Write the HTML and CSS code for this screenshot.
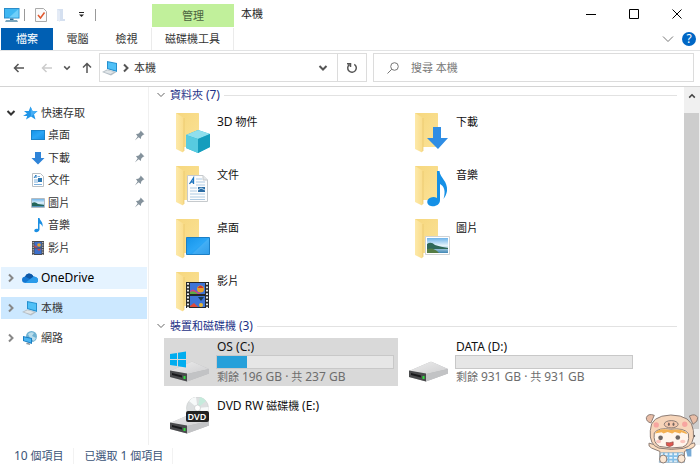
FILE: index.html
```
<!DOCTYPE html>
<html lang="zh-Hant">

<head>
    <meta charset="UTF-8">
    <meta name="viewport" content="width=device-width, initial-scale=1.0">
    <title>本機</title>
    <link rel="stylesheet" href="styles.css">
</head>

<body>
    <!-- icon sprite -->
    <svg class="sprite" width="0" height="0" aria-hidden="true">
        <defs>
            <linearGradient id="g-fold" x1="0" y1="0" x2="1" y2="1">
                <stop offset="0" stop-color="#f6d77e" />
                <stop offset="1" stop-color="#fbe296" />
            </linearGradient>
            <linearGradient id="g-flap" x1="0" y1="0" x2="1" y2="0">
                <stop offset="0" stop-color="#fde9a9" />
                <stop offset="1" stop-color="#f9dc8a" />
            </linearGradient>
            <linearGradient id="g-screen" x1="0" y1="0" x2="1" y2="1">
                <stop offset="0" stop-color="#1494ea" />
                <stop offset=".5" stop-color="#2ba6f6" />
                <stop offset="1" stop-color="#1590e6" />
            </linearGradient>
            <linearGradient id="g-drive" x1="0" y1="0" x2="1" y2="1">
                <stop offset="0" stop-color="#ececec" />
                <stop offset="1" stop-color="#cfcfd1" />
            </linearGradient>
            <linearGradient id="g-sky" x1="0" y1="0" x2="0" y2="1">
                <stop offset="0" stop-color="#6fb4ea" />
                <stop offset=".5" stop-color="#e4f3fb" />
                <stop offset="1" stop-color="#3f86b4" />
            </linearGradient>
        </defs>

        <symbol id="i-folder" viewBox="0 0 48 48">
            <path d="M12 0H34.500Q35 0 35 1V34H12Z" fill="url(#g-fold)" />
            <path d="M12 0L20 5V36Q20 40 18 39L12 36Z" fill="url(#g-flap)" />
            <path d="M20 5V38" stroke="#e8c468" stroke-width=".7" />
        </symbol>
        <symbol id="i-cube" viewBox="0 0 48 48">
            <path d="M34 17L46 21V34L34 40L22 35V22Z" fill="#27b3cf" />
            <path d="M34 17L46 21L34 26L22 22Z" fill="#8fdfed" />
            <path d="M22 22L34 26V40L22 35Z" fill="#57cbe0" />
            <path d="M34 26L46 21V34L34 40Z" fill="#159dbd" />
        </symbol>
        <symbol id="i-bigdown" viewBox="0 0 48 48">
            <path d="M30 14H38V25H45L35 36L24 25H30Z" fill="#2f8de4" />
        </symbol>
        <symbol id="i-bigdoc" viewBox="0 0 48 48">
            <path d="M23.500 9.500H39L43.500 14V35.500H23.500Z" fill="#fdfdfd" stroke="#c6cacd" />
            <path d="M39 9.500V14H43.500" fill="#e3e6e8" stroke="#c6cacd" />
            <path d="M25.500 18L29.500 12V18M27 16H30" fill="none" stroke="#2076c0" stroke-width="1.300" />
            <path d="M32 13H38M32 16H41M32 19H41M26 22H33M26 25H33M26 28H41M26 31H41M26 33.500H41" stroke="#aecbe4" />
            <path d="M34 21H41V26H34Z" fill="#2d6da5" />
            <path d="M34 24L37 22L41 24" fill="none" stroke="#bfe0f5" />
        </symbol>
        <symbol id="i-bignote" viewBox="0 0 48 48">
            <path d="M34 5H36.500C37 12 45 15 44 25C43.500 28 42 31 40.500 33C43 25 41 20 37 18V34C37 39 32 41 28 40C23 39 23 33 28 31.500C30 30.500 32 31 34 32Z" fill="#1590e6" />
        </symbol>
        <symbol id="i-bigscreen" viewBox="0 0 48 48">
            <path d="M22.500 18.500H45.500V35.500H22.500Z" fill="url(#g-screen)" stroke="#1b7fc6" />
            <path d="M45 19L28 35H45Z" fill="#fff" opacity=".12" />
        </symbol>
        <symbol id="i-bigphoto" viewBox="0 0 48 48">
            <path d="M22.500 17.500H46.500V35.500H22.500Z" fill="#fff" stroke="#d0d3d5" />
            <path d="M24 19H45V34H24Z" fill="url(#g-sky)" />
            <path d="M24 25Q28 22 32 26Q38 28 45 29V30H24Z" fill="#2f6858" />
            <path d="M24 30Q31 28 36 34H24Z" fill="#567d45" />
        </symbol>
        <symbol id="i-bigfilm" viewBox="0 0 48 48">
            <path d="M22 10H45V36H22Z" fill="#26282b" />
            <path d="M26 11H41V22H26ZM26 24H41V35H26Z" fill="#3f74d6" />
            <path d="M26 19Q29 16 32 19L37 22H26Z" fill="#d13f8c" />
            <path d="M26 20Q30 18 34 22H26Z" fill="#61a843" />
            <circle cx="36.500" cy="17" r="3.500" fill="#e7a02b" />
            <path d="M33.500 16Q36.500 11 39.500 16Z" fill="#cf352f" />
            <circle cx="37" cy="33" r="2" fill="#e8b632" />
            <path d="M34 25H40L37 29Z" fill="#193b55" />
            <path d="M26 34L30 31L34 35H26Z" fill="#e04a38" />
            <path d="M24 11V36M43 11V36" stroke="#fff" stroke-width="1.800" stroke-dasharray="1.800 1.600" />
        </symbol>

        <symbol id="i-drive" viewBox="0 0 48 48">
            <path d="M6 33L27 24Q28 23.700 29 24L45 31V35.500L23 43.500L6 39Z" fill="#b7b8ba" />
            <path d="M6 33L27 24Q28 23.700 29 24L45 31L23 36Z" fill="url(#g-drive)" />
            <path d="M6 32.500L23 35.500V43.500L6 39Z" fill="#4a4b4d" />
            <path d="M8 35L18 37.500V39.500L8 37Z" fill="#18191b" />
            <path d="M23 36L45 31V35.500L23 43.500Z" fill="#c2c3c5" />
            <path d="M19.500 38H21.500V41H19.500Z" fill="#2fdc3d" />
        </symbol>
        <symbol id="i-winlogo" viewBox="0 0 48 48">
            <path d="M6 16L13 15V21H6ZM14 14.800L22 13.500V21H14ZM6 22H13V28L6 27ZM14 22H22V29.500L14 28.200Z" fill="#00adef" />
        </symbol>
        <symbol id="i-disc" viewBox="0 0 48 48">
            <circle cx="33.500" cy="11" r="11" fill="#dcdfe0" stroke="#c9cccd" stroke-width=".6" />
            <path d="M33.500 11L25 4A11 11 0 0 1 32 0ZM33.500 11L42 18A11 11 0 0 0 44.500 10Z" fill="#f7fafa" />
            <path d="M33.500 11L36 0A11 11 0 0 1 42 4Z" fill="#c5ebdc" />
            <circle cx="33.500" cy="11" r="3" fill="#fff" stroke="#c0c3c4" stroke-width=".6" />
        </symbol>

        <symbol id="i-pc" viewBox="0 0 16 16">
            <path d="M0 1H15.500V11.500H0Z" fill="#2b8cc9" />
            <path d="M1 2H14.500V10.500H1Z" fill="#3fb7f2" />
            <path d="M14.500 2V10.500H5Z" fill="#6fcffa" />
            <path d="M2 13H13L14 15H1Z" fill="#7aa5bd" />
            <path d="M6 11.500H9.500V13H6Z" fill="#2b6f9b" />
        </symbol>
        <symbol id="i-laptop" viewBox="0 0 16 16">
            <path d="M5 1L15 3V12L5 9Z" fill="#2590cf" />
            <path d="M6 2.200L14 3.800V10.500L6 8.200Z" fill="#4fc0f7" />
            <path d="M0 12L5 9.500L14.500 12L9 15.500Z" fill="#b5bfc6" />
            <path d="M2 12L5.500 10.300L12 12L8.500 14Z" fill="#e0e6e9" />
        </symbol>
        <symbol id="i-star" viewBox="0 0 16 16">
            <path d="M8.500 1.500L10.500 6H15.500L12 9.200L13.500 14.500L9 11.500L4 14.500L5.200 11H1L5 8.500L2 6H6.800Z" fill="#2196e8" />
            <path d="M8.500 1.500L9 11.500L12 9.200L15.500 6H10.500Z" fill="#46aef5" />
        </symbol>
        <symbol id="i-screen" viewBox="0 0 16 16">
            <path d="M1 3H15V13H1Z" fill="#1b83ca" />
            <path d="M2 4H14V12H2Z" fill="url(#g-screen)" />
        </symbol>
        <symbol id="i-down" viewBox="0 0 16 16">
            <path d="M5 2H11V8H14.500L8 14.500L1.500 8H5Z" fill="#2f84d8" />
        </symbol>
        <symbol id="i-doc" viewBox="0 0 16 16">
            <path d="M2.500 1.500H10.500L13.500 4.500V14.500H2.500Z" fill="#fff" stroke="#b9bfc4" />
            <path d="M4 6L6 3V6" fill="none" stroke="#2377bd" />
            <path d="M7.500 4.500H10M4 8H8M4 10H8M4 12.500H12" stroke="#7fb0dc" />
            <path d="M8 6H12V10H8Z" fill="#2d77b1" />
        </symbol>
        <symbol id="i-photo" viewBox="0 0 16 16">
            <path d="M1.500 3.500H14.500V12.500H1.500Z" fill="#fff" stroke="#b3bbc1" />
            <path d="M2 4H14V12H2Z" fill="url(#g-sky)" />
            <path d="M2 8Q5 6 8 9L14 10V11H2Z" fill="#24665a" />
        </symbol>
        <symbol id="i-note" viewBox="0 0 16 16">
            <path d="M8 1H9.500C10 4 13.500 5 12.500 10C12 8 11 7 9.500 6.500V12.500C9 15 6 16 4.500 14.500C3.500 12.500 6 11 8 12Z" fill="#1b8fe3" />
        </symbol>
        <symbol id="i-film" viewBox="0 0 16 16">
            <path d="M2 1H14V15H2Z" fill="#4b4c50" />
            <path d="M4.500 2H11.500V7.500H4.500ZM4.500 8.500H11.500V14H4.500Z" fill="#3c6fca" />
            <circle cx="9" cy="5" r="1.800" fill="#e7a02b" />
            <path d="M4.500 5L8 7.500H4.500ZM7 9H11L9 11Z" fill="#d34545" />
            <path d="M3.200 2V15M12.800 2V15" stroke="#ddd" stroke-dasharray="1.200 1.200" />
        </symbol>
        <symbol id="i-cloud" viewBox="0 0 16 16">
            <path d="M4 13Q0 13 0 9.800Q0 7 3 6.500Q5 2.500 9 4Q10.500 4.500 11.500 6.500Q16 7 16 10.300Q16 13 13 13Z" fill="#1477d1" />
            <path d="M3 6.500Q5 2.500 9 4Q10.500 4.500 11.500 6.500L8 9Z" fill="#0d57a5" />
            <path d="M3 13L9 8.500L12 6.600Q16 7 16 10.300Q16 13 13 13Z" fill="#2a9bea" />
        </symbol>
        <symbol id="i-network" viewBox="0 0 16 16">
            <circle cx="9.500" cy="6.500" r="5.500" fill="#6fb2d2" />
            <path d="M6 4Q9 1 12 3L10 6L14 8L12 11L8 8Z" fill="#b9dceb" />
            <path d="M1 6L10 8V14L1 11Z" fill="#1b7ec2" />
            <path d="M2 7.200L9 8.800V12.600L2 10.400Z" fill="#49b5f2" />
            <path d="M5 12.500L8 13.500V15L4 14Z" fill="#8a9aa4" />
        </symbol>
        <symbol id="i-pin" viewBox="0 0 10 10">
            <path d="M6 .5L9.500 4L8.300 4.400L6.500 6.200L6.300 8.200L4.200 6.600L.8 9.500L3.300 5.800L1.800 3.700L3.900 3.500L5.600 1.800Z" fill="#84929c" />
        </symbol>
        <symbol id="i-chev-down" viewBox="0 0 10 10">
            <path d="M1.500 3L5 6.500L8.500 3" fill="none" stroke="currentColor" />
        </symbol>
        <symbol id="i-chev-right" viewBox="0 0 10 10">
            <path d="M3 1.500L6.500 5L3 8.500" fill="none" stroke="currentColor" />
        </symbol>
        <symbol id="i-arrow" viewBox="0 0 12 12">
            <path d="M11 6H1.500M5.500 2L1.500 6L5.500 10" fill="none" stroke="currentColor" stroke-width="1.500" />
        </symbol>
    </svg>

    <header>
        <div class="titlebar">
            <div class="quick-tools">
                <svg class="pc"><use href="#i-pc" /></svg>
                <span class="sep"></span>
                <button class="tool" aria-label="內容">
                    <svg width="12" height="14" viewBox="0 0 12 14">
                        <path d="M.5 .5H8.500L11.500 3.500V13.500H.5Z" fill="#fafafa" stroke="#aaa" />
                        <path d="M3 7L5.500 10L9.500 4.500" fill="none" stroke="#e0562b" stroke-width="1.500" />
                    </svg>
                </button>
                <button class="tool" aria-label="新增資料夾">
                    <svg width="10" height="14" viewBox="0 0 10 14">
                        <path d="M1 1H7V11H9V13H1Z" fill="#d5e0f0" />
                        <path d="M1 1L4 3V14L1 12Z" fill="#e4ebf6" />
                    </svg>
                </button>
                <button class="tool" aria-label="自訂快速存取工具列">
                    <svg width="7" height="6" viewBox="0 0 7 6">
                        <path d="M1 .5H6" stroke="#222" />
                        <path d="M1 2.500H6L3.500 5Z" fill="#222" />
                    </svg>
                </button>
                <span class="sep"></span>
            </div>
            <div class="context">管理</div>
            <h1>本機</h1>
            <div class="window-buttons">
                <button aria-label="最小化"><svg width="10" height="10"><path d="M0 5.500H10" stroke="#000" /></svg></button>
                <button aria-label="最大化"><svg width="10" height="10"><path d="M.5 .5H9.500V9.500H.5Z" fill="none" stroke="#000" /></svg></button>
                <button aria-label="關閉"><svg width="10" height="10"><path d="M.5 .5L9.500 9.500M9.500 .5L.5 9.500" stroke="#000" /></svg></button>
            </div>
        </div>
        <div class="tabs">
            <button class="tab file">檔案</button>
            <button class="tab">電腦</button>
            <button class="tab">檢視</button>
            <button class="tab drive-tools">磁碟機工具</button>
            <button class="collapse" aria-label="展開功能區">
                <svg width="12" height="8"><path d="M1 1.500L6 6.500L11 1.500" fill="none" stroke="#777" /></svg>
            </button>
            <button class="help" aria-label="說明">?</button>
        </div>
    </header>

    <div class="addressbar">
        <div class="history">
            <button aria-label="上一頁"><svg class="arrow"><use href="#i-arrow" /></svg></button>
            <button class="disabled" aria-label="下一頁" disabled><svg class="arrow"><use href="#i-arrow" /></svg></button>
            <button aria-label="最近的位置"><svg class="chev small"><use href="#i-chev-down" /></svg></button>
            <button aria-label="上移"><svg class="arrow"><use href="#i-arrow" /></svg></button>
        </div>
        <div class="address">
            <svg class="icon"><use href="#i-laptop" /></svg>
            <svg class="chev"><use href="#i-chev-right" /></svg>
            <a href="#">本機</a>
            <button class="drop" aria-label="先前的位置"><svg class="chev"><use href="#i-chev-down" /></svg></button>
            <button class="refresh" aria-label="重新整理">
                <svg width="12" height="12" viewBox="0 0 12 12">
                    <path d="M8.300 2.300A4.300 4.300 0 1 1 3.300 2.600M4.500 5V1.800H1" fill="none" stroke="#555" stroke-width="1.500" />
                </svg>
            </button>
        </div>
        <label class="search">
            <svg width="12" height="12" viewBox="0 0 12 12">
                <circle cx="7.500" cy="4.500" r="3.800" fill="none" stroke="#777" />
                <path d="M4.800 7.200L.5 11.500" stroke="#777" />
            </svg>
            <input type="search" placeholder="搜尋 本機" aria-label="搜尋 本機">
        </label>
    </div>

    <div class="explorer">
        <nav class="tree">
            <a class="node open" href="#"><svg class="chev"><use href="#i-chev-down" /></svg><svg class="icon"><use href="#i-star" /></svg>快速存取</a>
            <div class="children">
                <a class="node" href="#"><svg class="icon"><use href="#i-screen" /></svg>桌面<svg class="pin"><use href="#i-pin" /></svg></a>
                <a class="node" href="#"><svg class="icon"><use href="#i-down" /></svg>下載<svg class="pin"><use href="#i-pin" /></svg></a>
                <a class="node" href="#"><svg class="icon"><use href="#i-doc" /></svg>文件<svg class="pin"><use href="#i-pin" /></svg></a>
                <a class="node" href="#"><svg class="icon"><use href="#i-photo" /></svg>圖片<svg class="pin"><use href="#i-pin" /></svg></a>
                <a class="node" href="#"><svg class="icon"><use href="#i-note" /></svg>音樂</a>
                <a class="node" href="#"><svg class="icon"><use href="#i-film" /></svg>影片</a>
            </div>
            <a class="node hover" href="#"><svg class="chev"><use href="#i-chev-right" /></svg><svg class="icon"><use href="#i-cloud" /></svg><span lang="en">OneDrive</span></a>
            <a class="node current" href="#"><svg class="chev"><use href="#i-chev-right" /></svg><svg class="icon"><use href="#i-laptop" /></svg>本機</a>
            <a class="node" href="#"><svg class="chev"><use href="#i-chev-right" /></svg><svg class="icon"><use href="#i-network" /></svg>網路</a>
        </nav>

        <main>
            <section>
                <h2><svg class="chev"><use href="#i-chev-down" /></svg><span>資料夾 <span lang="en">(7)</span></span></h2>
                <div class="items folders">
                    <a class="item" href="#"><svg><use href="#i-folder" /><use href="#i-cube" /></svg><span class="name"><span lang="en">3D</span> 物件</span></a>
                    <a class="item" href="#"><svg><use href="#i-folder" /><use href="#i-bigdown" /></svg><span class="name">下載</span></a>
                    <a class="item" href="#"><svg><use href="#i-folder" /><use href="#i-bigdoc" /></svg><span class="name">文件</span></a>
                    <a class="item" href="#"><svg><use href="#i-folder" /><use href="#i-bignote" /></svg><span class="name">音樂</span></a>
                    <a class="item" href="#"><svg><use href="#i-folder" /><use href="#i-bigscreen" /></svg><span class="name">桌面</span></a>
                    <a class="item" href="#"><svg><use href="#i-folder" /><use href="#i-bigphoto" /></svg><span class="name">圖片</span></a>
                    <a class="item" href="#"><svg><use href="#i-folder" /><use href="#i-bigfilm" /></svg><span class="name">影片</span></a>
                </div>
            </section>
            <section>
                <h2><svg class="chev"><use href="#i-chev-down" /></svg><span>裝置和磁碟機 <span lang="en">(3)</span></span></h2>
                <div class="items drives">
                    <a class="item selected" href="#">
                        <svg><use href="#i-drive" /><use href="#i-winlogo" /></svg>
                        <div class="info">
                            <span class="name" lang="en">OS (C:)</span>
                            <div class="bar"><div class="used" style="width: 17%"></div></div>
                            <span class="space">剩餘 <span lang="en">196 GB ·</span> 共 <span lang="en">237 GB</span></span>
                        </div>
                    </a>
                    <a class="item" href="#">
                        <svg><use href="#i-drive" /></svg>
                        <div class="info">
                            <span class="name" lang="en">DATA (D:)</span>
                            <div class="bar"><div class="used" style="width: 0%"></div></div>
                            <span class="space">剩餘 <span lang="en">931 GB ·</span> 共 <span lang="en">931 GB</span></span>
                        </div>
                    </a>
                    <a class="item" href="#">
                        <svg>
                            <use href="#i-disc" />
                            <use href="#i-drive" y="-7" />
                            <rect x="22" y="14" width="23" height="11" rx="2" fill="#222" />
                            <text class="dvd" x="33" y="23" text-anchor="middle">DVD</text>
                        </svg>
                        <span class="name"><span lang="en">DVD RW</span> 磁碟機 <span lang="en">(E:)</span></span>
                    </a>
                </div>
            </section>
        </main>

        <div class="scrollbar">
            <button aria-label="向上捲動"><svg class="chev up"><use href="#i-chev-down" /></svg></button>
            <div class="thumb"></div>
            <button aria-label="向下捲動"><svg class="chev"><use href="#i-chev-down" /></svg></button>
        </div>
    </div>

    <footer>
        <span><span lang="en">10</span> 個項目</span>
        <span>已選取 <span lang="en">1</span> 個項目</span>
    </footer>

    <!-- piglet mascot -->
    <svg class="mascot" viewBox="75 98 163 154" aria-hidden="true">
        <g stroke="#8b7c75" stroke-width="3" stroke-linejoin="round">
            <path d="M87 189Q84 199 95 204L120 214V240H194V214L221 202Q230 195 224 188L200 196H112Z" fill="#fbdcbf" />
            <path d="M103 105Q84 98 79 112Q78 124 93 128ZM209 107Q228 98 234 112Q236 123 220 132Z" fill="#e9bda6" />
            <path d="M91 151Q91 106 153 104Q217 105 221 151Q227 198 190 205Q155 211 117 204Q87 194 91 151Z" fill="#f6d5ba" />
            <path d="M103 158Q116 141 153 147Q193 142 206 160Q211 194 188 201Q153 207 119 199Q99 190 103 158Z" fill="#fff5ec" />
        </g>
        <path d="M105 160Q112 143 153 149Q195 144 203 162L185 156L181 160L165 155L157 160L143 155L131 160L125 156Z" fill="#f3b052" />
        <ellipse cx="154" cy="132" rx="21" ry="11" fill="#f6c9ae" stroke="#8b7c75" stroke-width="3" />
        <ellipse cx="147" cy="132" rx="3" ry="5" fill="#75655f" />
        <ellipse cx="161" cy="132" rx="3" ry="5" fill="#75655f" />
        <g fill="#f7a5a0">
            <circle cx="109" cy="134" r="8" />
            <circle cx="195" cy="132" r="8" />
            <ellipse cx="116" cy="184" rx="8" ry="5" opacity=".6" />
            <ellipse cx="189" cy="184" rx="8" ry="5" opacity=".6" />
        </g>
        <g fill="#6d6665">
            <circle cx="122" cy="173" r="7" />
            <circle cx="174" cy="172" r="7" />
        </g>
        <path d="M139 187Q150 190 160 185V195Q150 203 140 196Z" fill="#e2564e" stroke="#8c4b45" stroke-width="2" />
        <path d="M122 218H190L194 247H118Z" fill="#e8f4fc" stroke="#6e99b8" stroke-width="2" />
        <path d="M132 218V247M146 218V247M160 218V247M174 218V247M120 228H192M119 239H193" stroke="#62ade0" stroke-width="5" opacity=".75" />
        <g fill="#fbe6d2" stroke="#8b7c75" stroke-width="3">
            <ellipse cx="130" cy="237" rx="11" ry="12" />
            <ellipse cx="185" cy="236" rx="11" ry="12" />
        </g>
        <path d="M198 207H215V229H203" fill="#5595ca" opacity=".8" />
    </svg>
</body>

</html>
```
FILE: styles.css
```
* {
    margin: 0;
    padding: 0;
    box-sizing: border-box;
}

body {
    display: flex;
    flex-direction: column;
    min-height: 100vh;
    background: #fff;
    color: #333;
    font-family: "Noto Sans", "Noto Sans CJK TC", sans-serif;
    font-size: 11px;
    line-height: 16px;
}

/* latin runs sit one size above the chinese text */
[lang="en"] {
    font-size: 12px;
}

h1,
h2 {
    font-size: 11px;
    font-weight: normal;
}

a {
    color: inherit;
    text-decoration: none;
}

button,
input {
    border: none;
    background: none;
    color: inherit;
    font: inherit;
}

button {
    display: flex;
    align-items: center;
    justify-content: center;
}

svg {
    display: block;
    flex-shrink: 0;
}

.sprite {
    position: absolute;
}

.icon {
    width: 16px;
    height: 16px;
}

.chev {
    width: 10px;
    height: 10px;
}

.arrow {
    width: 12px;
    height: 12px;
}

/* title bar and ribbon tabs */
header {
    border-bottom: 1px solid #e2e3e4;
}

.titlebar {
    display: flex;
    height: 27px;
}

.quick-tools {
    display: flex;
    align-items: center;
    width: 152px;
    padding: 2px 0 0 4px;
}

.pc {
    width: 16px;
    height: 16px;
}

.sep {
    width: 1px;
    height: 12px;
    margin: 0 4px;
    background: #999;
}

.tool {
    width: 20px;
    height: 20px;
}

.sep + .tool {
    margin-left: 2px;
}

.context {
    width: 82px;
    margin-top: 4px;
    background: #c1f09b;
    color: #4c6340;
    line-height: 23px;
    text-align: center;
}

h1 {
    flex: 1;
    padding-left: 7px;
    color: #222;
    line-height: 27px;
}

.window-buttons {
    display: flex;
    padding-right: 2px;
}

.window-buttons button {
    width: 43px;
    height: 27px;
}

.tabs {
    display: flex;
    align-items: center;
    height: 23px;
    padding: 0 4px 0 1px;
}

.tab {
    width: 49px;
    height: 22px;
}

.tab.file {
    width: 52px;
    background: #005fb3;
    color: #fff;
}

.tab.drive-tools {
    width: 83px;
    border: 1px solid #ebebeb;
    border-width: 0 1px;
}

.collapse {
    width: 20px;
    height: 20px;
    margin-left: auto;
}

.help {
    width: 14px;
    height: 14px;
    margin-left: 4px;
    border-radius: 50%;
    background: #0067c5;
    color: #fff;
    font-size: 12px;
}

/* navigation row */
.addressbar {
    display: flex;
    align-items: center;
    gap: 6px;
    height: 36px;
    padding: 0 6px 2px 13px;
    border-bottom: 1px solid #d4d4d4;
}

.history {
    display: flex;
    justify-content: space-between;
    width: 80px;
    color: #555;
}

.history .disabled {
    margin-left: 6px;
    color: #ccc;
}

.history button:last-child .arrow {
    transform: rotate(90deg);
}

.chev.small {
    width: 8px;
    height: 8px;
    stroke-width: 2px;
}

.address,
.search {
    display: flex;
    align-items: center;
    height: 29px;
    border: 1px solid #dcdcdc;
}

.address {
    flex: 5 1 0;
    gap: 3px;
}

.address .icon {
    margin-left: 2px;
}

.address .chev {
    color: #555;
    stroke-width: 2px;
}

.drop {
    width: 28px;
    height: 27px;
    margin-left: auto;
}

.refresh {
    width: 29px;
    height: 27px;
    margin-left: -3px;
    border-left: 1px solid #dcdcdc;
}

.search {
    flex: 6 1 0;
    gap: 12px;
}

.search svg {
    margin-left: 13px;
}

.search input {
    flex: 1;
    min-width: 0;
    outline: none;
}

.search input::placeholder {
    color: #777;
}

/* body */
.explorer {
    display: flex;
    flex: 1;
}

.tree {
    width: 149px;
    padding-top: 15px;
    border-right: 1px solid #f0f0f0;
}

.node {
    display: flex;
    align-items: center;
    height: 22px;
    margin: 0 1px 8px 1px;
    padding-left: 5px;
}

.node .chev {
    margin-right: 6px;
    color: #888;
    stroke-width: 2px;
}

.node .icon {
    margin-right: 3px;
}

.node.open {
    margin-bottom: 0;
}

.node.open .chev {
    color: #333;
}

.node.hover {
    background: #e5f3ff;
    color: #000;
}

.node.current {
    background: #cce8ff;
}

.children {
    display: grid;
    height: 135px;
    margin-bottom: 8px;
}

.children .node {
    height: auto;
    margin-bottom: 0;
    padding-left: 29px;
}

.children .icon {
    margin-right: 2px;
}

.pin {
    width: 11px;
    height: 11px;
    margin: 0 2px 0 auto;
}

main {
    flex: 1;
    padding: 0 7px;
}

h2 {
    display: flex;
    align-items: center;
    height: 16px;
    gap: 4px;
    color: #1e3287;
}

h2 .chev {
    color: #666;
}

h2::after {
    content: "";
    flex: 1;
    height: 1px;
    background: #e2e2e2;
}

.items {
    display: grid;
    grid-template-columns: repeat(auto-fill, 234px);
    column-gap: 5px;
    padding-left: 8px;
}

.folders {
    grid-auto-rows: 40px;
    row-gap: 13px;
    margin: 10px 0 6px;
}

.drives {
    grid-auto-rows: 48px;
    row-gap: 11px;
    margin-top: 4px;
}

.item {
    display: flex;
    gap: 5px;
}

.item > svg {
    width: 48px;
    height: 48px;
}

.item.selected {
    background: #d9d9d9;
}

.name {
    display: block;
    padding-top: 1px;
    color: #111;
}

.info .name,
.info .space {
    white-space: nowrap;
}

.bar {
    width: 178px;
    height: 14px;
    margin-left: -1px;
    border: 1px solid #c8c8c8;
    background: #e6e6e6;
}

.used {
    height: 100%;
    background: #26a0da;
}

.space {
    display: block;
    color: #6d6d6d;
}

.dvd {
    fill: #fff;
    font-size: 9px;
    font-weight: 600;
}

.scrollbar {
    display: flex;
    flex-direction: column;
    width: 16px;
    padding-right: 1px;
    background: #f0f0f0;
}

.scrollbar button {
    height: 16px;
    color: #444;
    stroke-width: 2px;
}

.scrollbar button:first-child {
    height: 26px;
    padding-bottom: 8px;
}

.scrollbar .chev {
    width: 8px;
    height: 8px;
}

.up {
    transform: rotate(180deg);
}

.thumb {
    flex: 1;
    background: #cdcdcd;
}

footer {
    display: flex;
    height: 23px;
    padding: 3px 14px;
    color: #3a5377;
}

footer > span {
    margin-right: 11px;
    padding-right: 9px;
    border-right: 1px solid #f2f2f2;
}

/* sits over the corner of the window */
.mascot {
    position: fixed;
    right: 1px;
    bottom: 0;
    width: 54px;
    height: 51px;
}
```
